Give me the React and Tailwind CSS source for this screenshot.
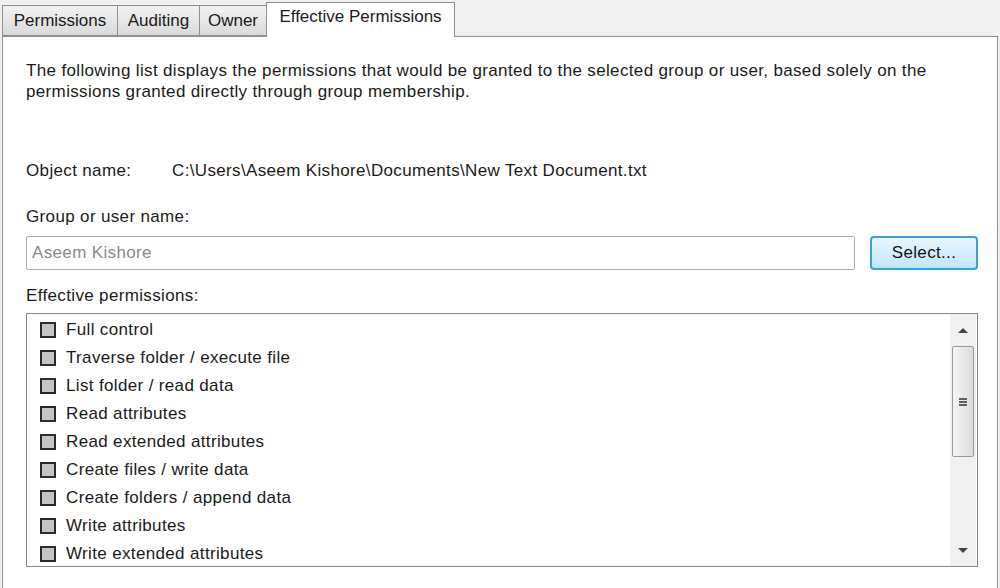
import React from "react";

const tabs = [
    { name: "Permissions", w: "w-[115px]" },
    { name: "Auditing", w: "w-[82px]" },
    { name: "Owner", w: "w-[67px]" },
];

const permissions = [
    "Full control",
    "Traverse folder / execute file",
    "List folder / read data",
    "Read attributes",
    "Read extended attributes",
    "Create files / write data",
    "Create folders / append data",
    "Write attributes",
    "Write extended attributes",
];

const App = () => {
    return (
        <div
            className="w-[1000px] h-[588px] overflow-hidden bg-[#f0f0f0] text-[17px] text-[#1a1a1a]"
            style={{ fontFamily: '"Liberation Sans", Arial, sans-serif' }}
        >
            {/* tab strip */}
            <div className="flex items-end h-[36px] pl-[2px] relative z-10">
                {tabs.map((t) => (
                    <div
                        key={t.name}
                        className={`${t.w} h-[31px] pt-[5px] text-center border border-[#8e8f8f] border-r-0 bg-gradient-to-b from-[#f2f2f2] to-[#dadada] leading-[20px]`}
                    >
                        {t.name}
                    </div>
                ))}
                <div className="w-[189px] h-[35px] pt-[4px] text-center border border-[#8e8f8f] border-b-0 bg-white leading-[20px] mb-[-1px]">
                    Effective Permissions
                </div>
            </div>

            {/* panel */}
            <div className="mx-[2px] h-[560px] border border-[#8e8f8f] bg-white pl-[23px] pr-[19px] pt-[23px] tracking-[0.35px]">
                <p className="leading-[21px] w-[940px]">
                    The following list displays the permissions that would be granted to the selected group or user, based solely on the permissions granted directly through group membership.
                </p>

                <div className="flex mt-[59px] leading-[20px]">
                    <span className="w-[146px]">Object name:</span>
                    <span>C:\Users\Aseem Kishore\Documents\New Text Document.txt</span>
                </div>

                <div className="mt-[26px] leading-[20px]">Group or user name:</div>

                <div className="flex items-center mt-[9px] gap-[15px]">
                    <div className="w-[829px] shrink-0 h-[34px] border border-[#abadb3] rounded-[2px] flex items-center px-[5px] text-[#8a8a8a]">
                        Aseem Kishore
                    </div>
                    <button className="w-[108px] shrink-0 h-[34px] rounded-[4px] border-2 border-[#3c9fd6] bg-gradient-to-b from-[#eaf6fd] to-[#bee6fd] text-[#111]">
                        Select...
                    </button>
                </div>

                <div className="mt-[16px] leading-[20px]">Effective permissions:</div>

                <div className="mt-[7px] w-[952px] h-[254px] border border-[#828790] flex">
                    <div className="flex-1 pt-[2px] pl-[13px]">
                        {permissions.map((p) => (
                            <div key={p} className="flex items-center h-[28px]">
                                <span className="w-[16px] h-[16px] border-2 border-[#2a2a2a] bg-[#c4c4c4] mr-[10px]"></span>
                                <span className="leading-[20px]">{p}</span>
                            </div>
                        ))}
                    </div>
                    <div className="w-[26px] mr-[1px] bg-[#f0f0f0] flex flex-col items-center">
                        <div className="h-[32px] flex items-center justify-center">
                            <svg width="10" height="6" viewBox="0 0 10 6">
                                <path d="M0 6 L5 1 L10 6 Z" fill="#444" />
                            </svg>
                        </div>
                        <div className="w-[22px] h-[111px] border border-[#9a9a9a] rounded-[2px] bg-gradient-to-r from-[#f4f4f4] to-[#dcdcdc] flex items-center justify-center">
                            <svg width="10" height="10" viewBox="0 0 10 10">
                                <path d="M1 2 H9 M1 5 H9 M1 8 H9" stroke="#333" strokeWidth="1.4" />
                            </svg>
                        </div>
                        <div className="flex-1" />
                        <div className="h-[30px] flex items-center justify-center">
                            <svg width="10" height="6" viewBox="0 0 10 6">
                                <path d="M0 0 L5 5 L10 0 Z" fill="#444" />
                            </svg>
                        </div>
                    </div>
                </div>
            </div>
        </div>
    );
};

export default App;
